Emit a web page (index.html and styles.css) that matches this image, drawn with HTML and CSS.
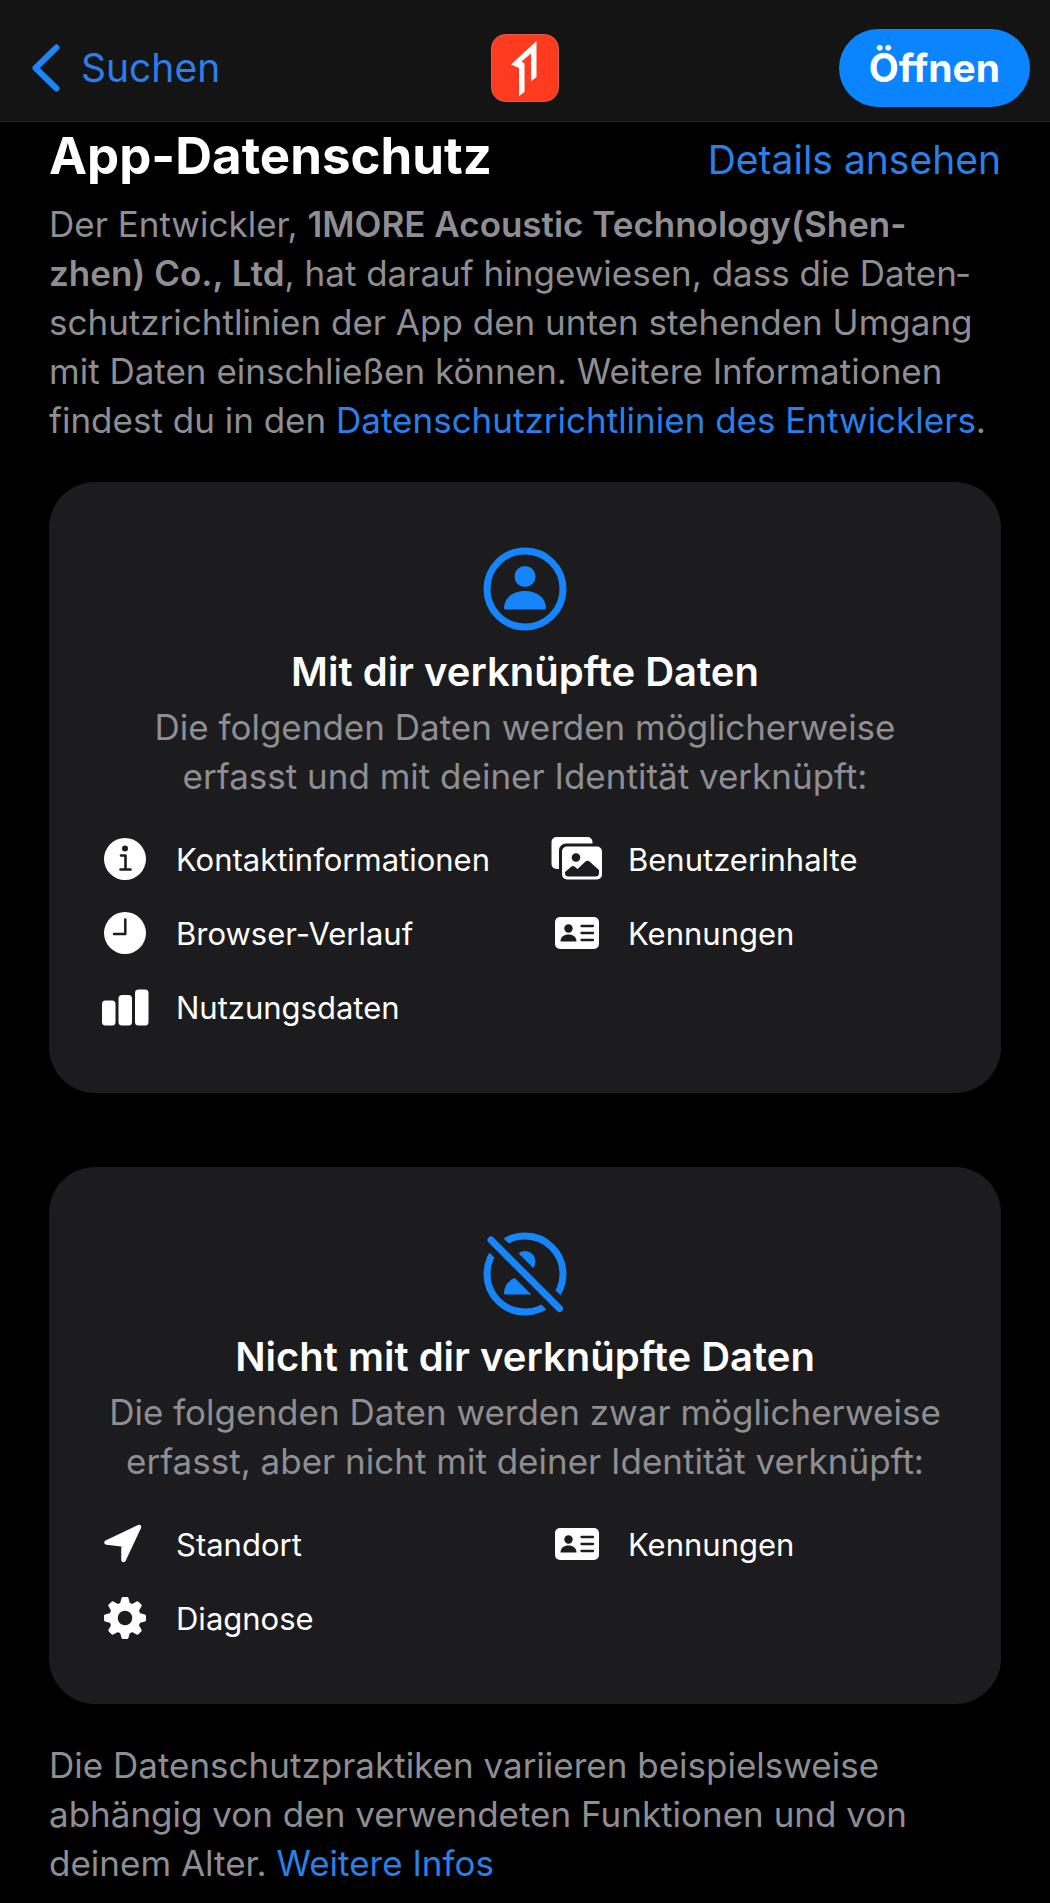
FILE: index.html
```html
<!DOCTYPE html>
<html lang="de">
<head>
    <meta charset="UTF-8">
    <meta name="viewport" content="width=device-width, initial-scale=1.0">
    <title>App-Datenschutz</title>
    <link rel="stylesheet" href="styles.css">
</head>
<body>

<header class="navbar">
    <a class="back" href="#">
        <svg class="back-icon" viewBox="0 0 28 48" aria-hidden="true">
            <path d="M24.500 3.500 L3.500 24 L24.500 44.500" fill="none" stroke="currentColor" stroke-width="6" stroke-linecap="round" stroke-linejoin="round"/>
        </svg>
        <span>Suchen</span>
    </a>
    <svg class="app-icon" viewBox="0 0 68 68" aria-hidden="true">
        <rect x="0.500" y="0.500" width="67" height="67" rx="14" fill="#ff3b1f" stroke="#d9604c"/>
        <path d="M20 30.500 L45.500 7 V43 L40 47.500 V19.500 L30.500 27.500 L33.500 29.500 V58 L28 62 V34 Z" fill="#fff"/>
    </svg>
    <button class="open-btn" type="button">Öffnen</button>
</header>

<main class="content">
    <div class="section-head">
        <h1>App-Datenschutz</h1>
        <a class="details" href="#">Details ansehen</a>
    </div>
    <p class="text">Der Entwickler, <strong>1MORE Acoustic Technology(Shen-<br>zhen) Co., Ltd</strong>, hat darauf hingewiesen, dass die Daten&shy;schutzrichtlinien der App den unten stehenden Umgang mit Daten einschließen können. Weitere Informationen findest du in den <a href="#">Datenschutzrichtlinien des Entwicklers</a>.</p>

    <section class="card">
        <svg class="card-icon" viewBox="0 0 84 84" aria-hidden="true">
            <circle cx="42" cy="42" r="38" fill="none" stroke="currentColor" stroke-width="7"/>
            <circle cx="42" cy="29.500" r="10.500" fill="currentColor"/>
            <path d="M21 61 C21 51 30 44 42 44 C54 44 63 51 63 61 Q63 62.500 61.500 62.500 H22.500 Q21 62.500 21 61 Z" fill="currentColor"/>
        </svg>
        <h2>Mit dir verknüpfte Daten</h2>
        <p class="text">Die folgenden Daten werden möglicherweise erfasst und mit deiner Identität verknüpft:</p>
        <ul class="data-list">
            <li>
                <svg class="icon" viewBox="0 0 44 44" aria-hidden="true">
                    <circle cx="22" cy="22" r="21" fill="#fff"/>
                    <circle cx="22" cy="11.500" r="3" fill="#1c1c1e"/>
                    <path d="M18 18.500 H22.500 V32.500 M17.500 32.500 H27.500" fill="none" stroke="#1c1c1e" stroke-width="2.600" stroke-linecap="round" stroke-linejoin="round"/>
                </svg>
                Kontaktinformationen
            </li>
            <li>
                <svg class="icon wide" viewBox="0 0 52 44" aria-hidden="true">
                    <rect x="0.500" y="0" width="41" height="32" rx="5" fill="#fff"/>
                    <rect x="8" y="6.500" width="46" height="40" rx="7" fill="#1c1c1e"/>
                    <rect x="11" y="9.500" width="40" height="33" rx="5" fill="#fff"/>
                    <circle cx="25" cy="20.500" r="4.300" fill="#1c1c1e"/>
                    <path d="M14 35 L20.500 29.500 Q22 28.500 23.500 29.500 L26.500 32 L34.500 24.500 Q36.500 23 38.500 24.500 L48 33 V36 Q48 39.500 44.500 39.500 H17.500 Q14 39.500 14 36 Z" fill="#1c1c1e"/>
                </svg>
                Benutzerinhalte
            </li>
            <li>
                <svg class="icon" viewBox="0 0 44 44" aria-hidden="true">
                    <circle cx="22" cy="22" r="21" fill="#fff"/>
                    <path d="M22.300 8.500 V23 H11" fill="none" stroke="#1c1c1e" stroke-width="2.500" stroke-linecap="round" stroke-linejoin="round"/>
                </svg>
                Browser-Verlauf
            </li>
            <li>
                <svg class="icon" viewBox="0 0 44 44" aria-hidden="true">
                    <rect x="0" y="6" width="44" height="32" rx="5" fill="#fff"/>
                    <circle cx="13.500" cy="17.500" r="4.200" fill="#1c1c1e"/>
                    <path d="M5.500 30.500 C5.500 26 9 23.500 13.500 23.500 C18 23.500 21.500 26 21.500 30.500 Z" fill="#1c1c1e"/>
                    <path d="M26.500 15 H38 M26.500 22 H38 M26.500 29 H38" stroke="#1c1c1e" stroke-width="2.300" stroke-linecap="round"/>
                </svg>
                Kennungen
            </li>
            <li>
                <svg class="icon wide" viewBox="0 0 52 44" aria-hidden="true">
                    <rect x="3" y="15.500" width="13.500" height="25" rx="3.500" fill="#fff"/>
                    <rect x="19.500" y="10" width="13.500" height="30.500" rx="3.500" fill="#fff"/>
                    <rect x="36" y="4.500" width="13.500" height="36" rx="3.500" fill="#fff"/>
                </svg>
                Nutzungsdaten
            </li>
        </ul>
    </section>

    <section class="card">
        <svg class="card-icon" viewBox="0 0 84 84" aria-hidden="true">
            <circle cx="42" cy="42" r="38" fill="none" stroke="currentColor" stroke-width="7"/>
            <circle cx="42" cy="29.500" r="10.500" fill="currentColor"/>
            <path d="M21 61 C21 51 30 44 42 44 C54 44 63 51 63 61 Q63 62.500 61.500 62.500 H22.500 Q21 62.500 21 61 Z" fill="currentColor"/>
            <path d="M0 0 L84 84" stroke="#1c1c1e" stroke-width="20"/>
            <path d="M8 8 L76.500 76.500" stroke="currentColor" stroke-width="7" stroke-linecap="round"/>
        </svg>
        <h2>Nicht mit dir verknüpfte Daten</h2>
        <p class="text">Die folgenden Daten werden zwar möglicherweise erfasst, aber nicht mit deiner Identität verknüpft:</p>
        <ul class="data-list">
            <li>
                <svg class="icon" viewBox="0 0 44 44" aria-hidden="true">
                    <path d="M3.500 20.500 L36 5 L20.500 38 V22.500 Z" fill="#fff" stroke="#fff" stroke-width="4.500" stroke-linejoin="round"/>
                </svg>
                Standort
            </li>
            <li>
                <svg class="icon" viewBox="0 0 44 44" aria-hidden="true">
                    <rect x="0" y="6" width="44" height="32" rx="5" fill="#fff"/>
                    <circle cx="13.500" cy="17.500" r="4.200" fill="#1c1c1e"/>
                    <path d="M5.500 30.500 C5.500 26 9 23.500 13.500 23.500 C18 23.500 21.500 26 21.500 30.500 Z" fill="#1c1c1e"/>
                    <path d="M26.500 15 H38 M26.500 22 H38 M26.500 29 H38" stroke="#1c1c1e" stroke-width="2.300" stroke-linecap="round"/>
                </svg>
                Kennungen
            </li>
            <li>
                <svg class="icon" viewBox="0 0 44 44" aria-hidden="true">
                    <g stroke="#fff" stroke-width="3" stroke-linejoin="round" fill="#fff">
                        <path id="tooth" d="M20 2.500 H24 L25.500 8 H18.500 Z M20 41.500 H24 L25.500 36 H18.500 Z"/>
                        <use href="#tooth" transform="rotate(45 22 22)"/>
                        <use href="#tooth" transform="rotate(90 22 22)"/>
                        <use href="#tooth" transform="rotate(135 22 22)"/>
                    </g>
                    <circle cx="22" cy="22" r="11.500" fill="none" stroke="#fff" stroke-width="8.500"/>
                </svg>
                Diagnose
            </li>
        </ul>
    </section>

    <p class="text footnote">Die Datenschutzpraktiken variieren beispielsweise abhängig von den verwendeten Funktionen und von deinem Alter. <a href="#">Weitere Infos</a></p>
</main>

</body>
</html>
```
FILE: styles.css
```css
* {
    box-sizing: border-box;
}
body {
    margin: 0;
    background-color: #000;
    color: #fff;
    font-family: Inter, "Liberation Sans", sans-serif;
}
h1, h2, p, ul {
    margin: 0;
}
a {
    color: #2a80e8;
    text-decoration: none;
}
.navbar {
    display: grid;
    grid-template-columns: 1fr auto 1fr;
    align-items: center;
    height: 122px;
    padding: 14px 20px 0;
    background-color: #141414;
    border-bottom: 1px solid #222;
}
.back {
    display: flex;
    align-items: center;
    gap: 21px;
    padding-left: 12px;
    font-size: 39px;
}
.back-icon {
    width: 28px;
    height: 48px;
    color: #1a86fa;
}
.app-icon {
    width: 68px;
    height: 68px;
}
.open-btn {
    justify-self: end;
    height: 78px;
    padding: 0 30px;
    border: none;
    border-radius: 39px;
    background-color: #0a84ff;
    color: #fff;
    font-family: inherit;
    font-size: 39px;
    font-weight: 700;
    cursor: pointer;
}
.content {
    padding: 4px 49px 14px;
}
.section-head {
    display: flex;
    justify-content: space-between;
    align-items: baseline;
    margin-bottom: 14px;
}
h1 {
    font-size: 51px;
    font-weight: 700;
    line-height: 60px;
}
.details {
    font-size: 39px;
}
.text {
    color: #8e8e93;
    font-size: 35px;
    line-height: 49px;
}
.text strong {
    font-weight: 600;
}
.card {
    margin-top: 37px;
    padding: 65px 54px 64px;
    border-radius: 46px;
    background-color: #1c1c1e;
    text-align: center;
}
.card + .card {
    margin-top: 74px;
}
.card-icon {
    display: block;
    width: 84px;
    height: 84px;
    margin: 0 auto 16px;
    color: #1485fb;
}
h2 {
    margin-bottom: 6px;
    font-size: 40px;
    font-weight: 600;
    line-height: 50px;
}
.data-list {
    display: grid;
    grid-template-columns: 1fr 1fr;
    gap: 30px 60px;
    margin-top: 36px;
    padding: 0;
    list-style: none;
    text-align: left;
}
.data-list li {
    display: flex;
    align-items: center;
    gap: 29px;
    height: 44px;
    font-size: 31px;
    white-space: nowrap;
}
.icon {
    flex: none;
    width: 44px;
    height: 44px;
}
.icon.wide {
    width: 52px;
    margin: 0 -4px;
}
.footnote {
    margin-top: 37px;
}
```
